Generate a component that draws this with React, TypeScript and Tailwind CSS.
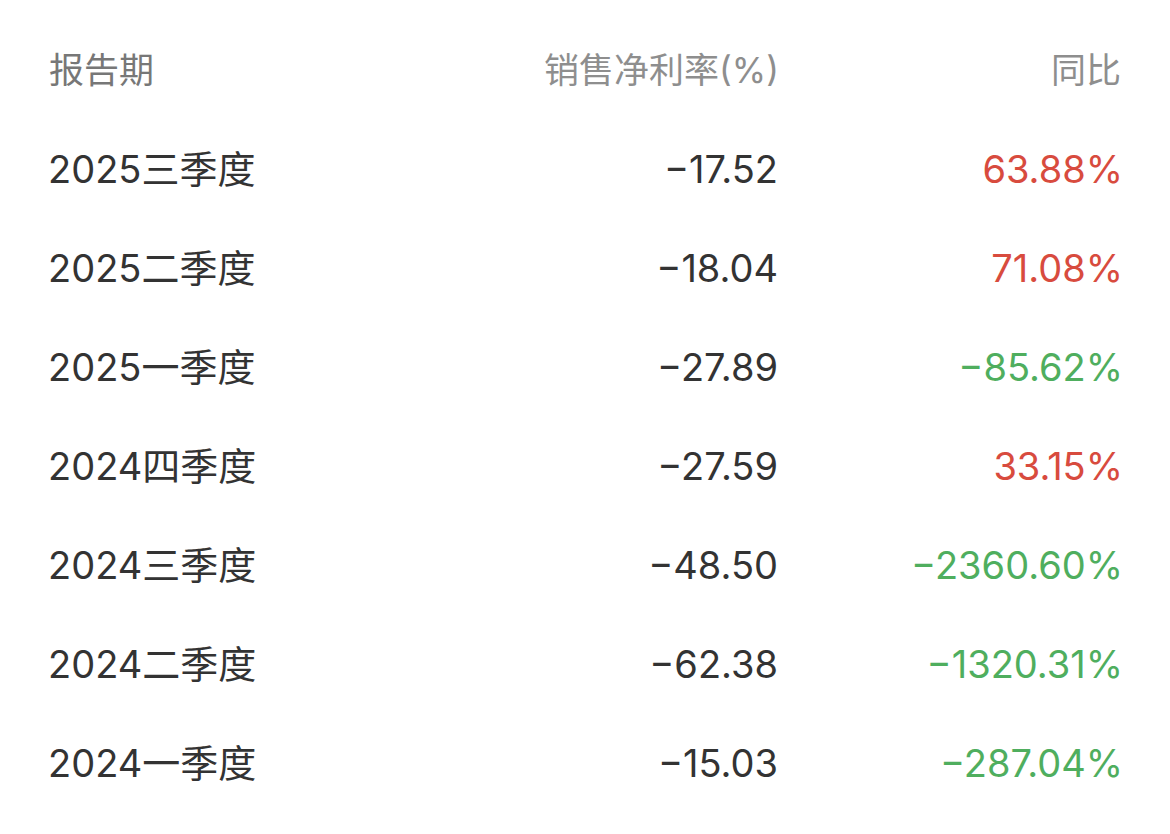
import React from "react";

const rows = [
  { period: "2025三季度", margin: "−17.52", yoy: "63.88%", up: true },
  { period: "2025二季度", margin: "−18.04", yoy: "71.08%", up: true },
  { period: "2025一季度", margin: "−27.89", yoy: "−85.62%", up: false },
  { period: "2024四季度", margin: "−27.59", yoy: "33.15%", up: true },
  { period: "2024三季度", margin: "−48.50", yoy: "−2360.60%", up: false },
  { period: "2024二季度", margin: "−62.38", yoy: "−1320.31%", up: false },
  { period: "2024一季度", margin: "−15.03", yoy: "−287.04%", up: false },
];

export default function App() {
  return (
    <div className="w-[1170px] h-[834px] bg-white pl-[48px] pr-[47px] pt-[21px] font-['Inter','Noto_Sans_CJK_SC',sans-serif]">
      {/* Header */}
      <div className="flex items-center h-[99px] text-[35px] text-[#8e8e8e]">
        <div className="flex-1 pl-[1px] text-[#777]">报告期</div>
        <div className="w-[300px] text-right pr-[1px]">销售净利率(%)</div>
        <div className="w-[343px] text-right pr-[2px]">同比</div>
      </div>

      {rows.map((row) => (
        <div key={row.period} className="flex items-center h-[99px] text-[38px] text-[#333]">
          <div className="flex-1">{row.period}</div>
          <div className="w-[300px] text-right pr-[2px]">{row.margin}</div>
          <div
            className={
              "w-[343px] text-right " + (row.up ? "text-[#d84b3e]" : "text-[#4fae5e]")
            }
          >
            {row.yoy}
          </div>
        </div>
      ))}
    </div>
  );
}
